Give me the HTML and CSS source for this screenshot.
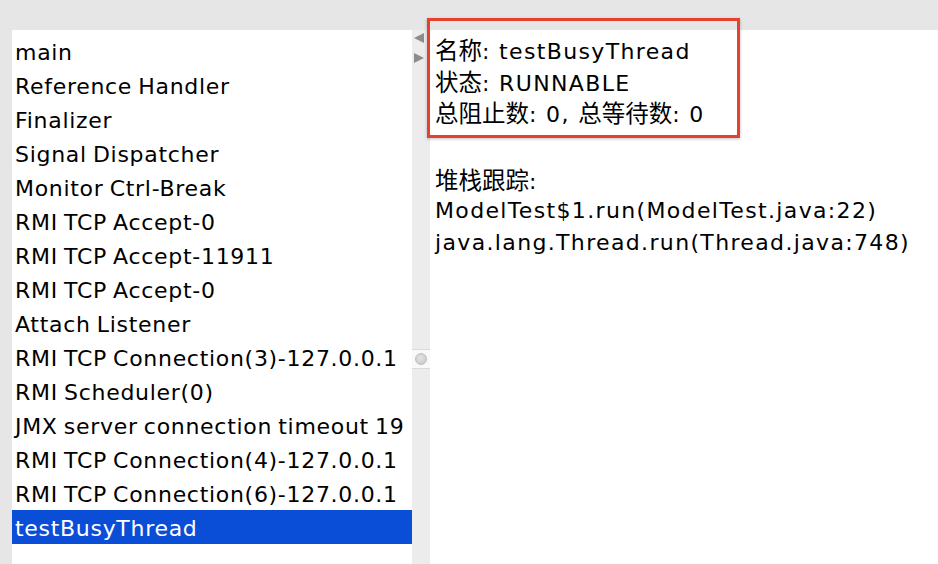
FILE: index.html
```html
<!DOCTYPE html>
<html>
<head>
<meta charset="utf-8">
<link rel="stylesheet" href="styles.css">
</head>
<body>
<div class="topband"></div>
<div class="main">
  <div class="gutter"></div>
  <div class="list">
    <div class="row">main</div>
    <div class="row">Reference Handler</div>
    <div class="row">Finalizer</div>
    <div class="row">Signal Dispatcher</div>
    <div class="row">Monitor Ctrl-Break</div>
    <div class="row">RMI TCP Accept-0</div>
    <div class="row">RMI TCP Accept-11911</div>
    <div class="row">RMI TCP Accept-0</div>
    <div class="row">Attach Listener</div>
    <div class="row">RMI TCP Connection(3)-127.0.0.1</div>
    <div class="row">RMI Scheduler(0)</div>
    <div class="row">JMX server connection timeout 19</div>
    <div class="row">RMI TCP Connection(4)-127.0.0.1</div>
    <div class="row">RMI TCP Connection(6)-127.0.0.1</div>
    <div class="row selected">testBusyThread</div>
  </div>
  <div class="divider">
    <div class="arrows">
      <svg width="14" height="36" viewBox="0 0 14 36">
        <polygon points="2,8 12,3 12,13" fill="#8c8c8c"/>
        <polygon points="2,23 12,28 2,33" fill="#8c8c8c"/>
      </svg>
    </div>
    <div class="knobzone"><div class="knob"></div></div>
  </div>
  <div class="detail">
    <div class="line"><span class="cj">名称</span>: testBusyThread</div>
    <div class="line"><span class="cj">状态</span>: RUNNABLE</div>
    <div class="line"><span class="cj">总阻止数</span>: 0, <span class="cj">总等待数</span>: 0</div>
    <div class="line blank"></div>
    <div class="line"><span class="cj">堆栈跟踪</span>:</div>
    <div class="line">ModelTest$1.run(ModelTest.java:22)</div>
    <div class="line">java.lang.Thread.run(Thread.java:748)</div>
  </div>
</div>
<div class="highlight"></div>
</body>
</html>
```
FILE: styles.css
```css
html, body {
  margin: 0;
  padding: 0;
}
body {
  width: 938px;
  height: 564px;
  overflow: hidden;
  background: #e6e6e6;
  position: relative;
}
.topband {
  height: 30px;
  background: #e6e6e6;
}
.main {
  display: flex;
  height: 534px;
}
.gutter {
  width: 12px;
  background: #e6e6e6;
}
.list {
  width: 400px;
  background: #ffffff;
  padding-top: 4px;
  font-family: "DejaVu Sans", sans-serif;
  font-size: 22px;
  letter-spacing: 0.7px;
  word-spacing: -1.5px;
  color: #000;
}
.row {
  height: 34px;
  box-sizing: border-box;
  padding-top: 3px;
  line-height: 31px;
  padding-left: 3px;
  white-space: nowrap;
  overflow: hidden;
}
.row.selected {
  background: #0a4dd6;
  color: #ffffff;
}
.divider {
  width: 18px;
  background: #ececec;
  display: flex;
  flex-direction: column;
}
.arrows {
  height: 36px;
}
.arrows svg {
  display: block;
}
.knobzone {
  margin-top: 283px;
  height: 18px;
  background: #f9f9f9;
  border-top: 1px solid #dadada;
  border-bottom: 1px solid #dadada;
  display: flex;
  align-items: center;
  justify-content: center;
}
.knob {
  width: 12px;
  height: 12px;
  border-radius: 50%;
  background: radial-gradient(circle at 45% 40%, #e4e4e4, #c4c4c4);
  border: 1px solid #c0c0c0;
  box-sizing: border-box;
}
.detail {
  flex: 1;
  background: #ffffff;
  padding-top: 4px;
  padding-left: 5px;
  font-family: "DejaVu Sans", "Noto Sans CJK SC", sans-serif;
  font-size: 22px;
  letter-spacing: 1.35px;
  color: #000;
}
.cj {
  font-family: "Noto Sans CJK SC", sans-serif;
  font-size: 23.5px;
  letter-spacing: 0;
}
.line {
  height: 31.5px;
  line-height: 31.5px;
  white-space: nowrap;
}
.line.blank {
  height: 35px;
}
.highlight {
  position: absolute;
  left: 427px;
  top: 18px;
  width: 313px;
  height: 120px;
  box-sizing: border-box;
  border: 3px solid #e5412e;
  box-shadow: 0 1px 3px rgba(0,0,0,0.25);
}
```
